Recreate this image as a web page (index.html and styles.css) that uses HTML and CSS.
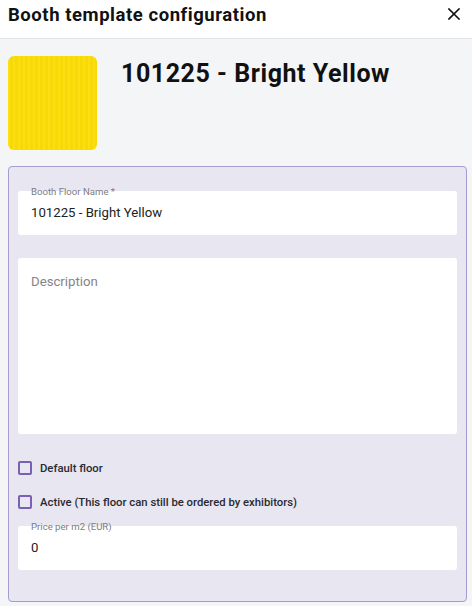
FILE: index.html
```html
<!DOCTYPE html>
<html lang="en">
<head>
<meta charset="utf-8">
<title>Booth template configuration</title>
<link rel="stylesheet" href="styles.css">
</head>
<body>
<div class="dialog">
  <header class="dlg-head">
    <h1 class="dlg-title">Booth template configuration</h1>
    <button class="close" aria-label="Close">
      <svg width="12" height="12" viewBox="0 0 12 12"><path d="M1 1L11 11M11 1L1 11" stroke="#111" stroke-width="1.6" stroke-linecap="square"/></svg>
    </button>
  </header>
  <main class="dlg-body">
    <section class="summary">
      <div class="swatch"></div>
      <h2 class="name">101225 - Bright Yellow</h2>
    </section>
    <form class="panel">
      <div class="field">
        <label class="flabel">Booth Floor Name *</label>
        <div class="fvalue">101225 - Bright Yellow</div>
      </div>
      <div class="area">
        <div class="placeholder">Description</div>
      </div>
      <label class="check first"><span class="box"></span><span class="ctext">Default floor</span></label>
      <label class="check second"><span class="box"></span><span class="ctext">Active (This floor can still be ordered by exhibitors)</span></label>
      <div class="field price">
        <label class="flabel">Price per m2 (EUR)</label>
        <div class="fvalue">0</div>
      </div>
    </form>
  </main>
</div>
</body>
</html>
```
FILE: styles.css
```css
* { box-sizing: border-box; }
html, body { margin: 0; padding: 0; }
body {
  width: 472px;
  height: 606px;
  overflow: hidden;
  background: #f4f5f7;
  font-family: Roboto, "Liberation Sans", sans-serif;
  color: #1b1b1f;
}
.dialog { display: flex; flex-direction: column; height: 606px; }
.dlg-head {
  height: 39px;
  background: #fff;
  border-bottom: 1px solid #e2e3e6;
  display: flex;
  align-items: flex-start;
  justify-content: space-between;
  padding: 0 12px 0 8px;
}
.dlg-title {
  margin: 4px 0 0;
  font-size: 18.5px;
  font-weight: 700;
  line-height: 22px;
  color: #111;
  letter-spacing: 0.55px;
}
.close {
  border: 0;
  background: none;
  padding: 0;
  margin-top: 8px;
  width: 12px;
  height: 12px;
  display: flex;
}
.dlg-body { padding: 17px 5px 0 8px; flex: 1; }
.summary { display: flex; align-items: flex-start; height: 110px; }
.swatch {
  width: 89px;
  height: 94px;
  border-radius: 6px;
  background:
    repeating-linear-gradient(90deg, rgba(255,255,255,0.05) 0 2px, rgba(0,0,0,0.02) 2px 5px),
    #fbdd05;
}
.name {
  margin: 3px 0 0 24px;
  font-size: 25px;
  font-weight: 700;
  line-height: 30px;
  color: #111;
  letter-spacing: 0.55px;
}
.panel {
  height: 436px;
  border: 1px solid #a89bd1;
  border-radius: 4px;
  background: #e8e6f0;
  padding: 24px 9px 0 9px;
  display: flex;
  flex-direction: column;
}
.field {
  position: relative;
  height: 44px;
  background: #fff;
  border-radius: 3px;
  padding: 13px 13px 0;
}
.flabel {
  position: absolute;
  left: 13px;
  top: -5px;
  font-size: 9.6px;
  line-height: 12px;
  color: #7c7c84;
}
.fvalue { font-size: 13.2px; line-height: 18px; color: #222; }
.area {
  margin-top: 23px;
  height: 176px;
  background: #fff;
  border-radius: 3px;
  padding: 15px 13px;
}
.placeholder { font-size: 13.2px; line-height: 18px; color: #84848c; }
.check { display: flex; align-items: center; height: 14px; }
.check.first { margin-top: 27px; }
.check.second { margin-top: 20px; }
.box {
  width: 14px;
  height: 14px;
  border: 2px solid #7a5fb2;
  border-radius: 2px;
  background: transparent;
  flex: none;
}
.ctext {
  margin-left: 8px;
  font-size: 11.3px;
  font-weight: 500;
  color: #2a2a30;
}
.price { margin-top: 17px; }
```
